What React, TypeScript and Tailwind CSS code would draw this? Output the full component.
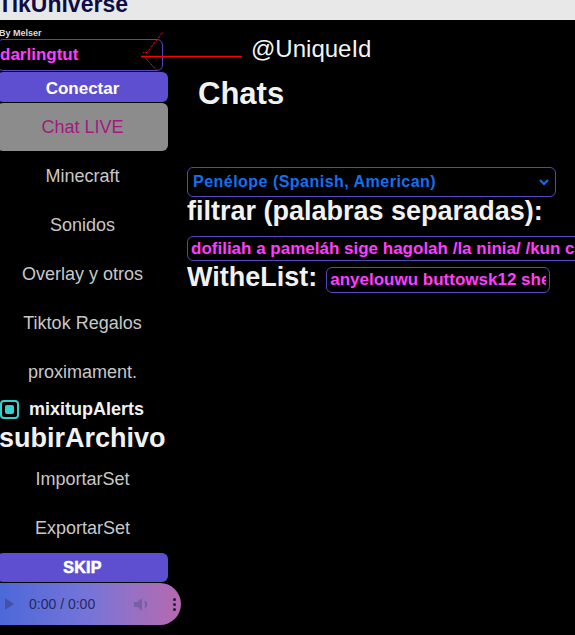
const navItems = ['Minecraft', 'Sonidos', 'Overlay y otros', 'Tiktok Regalos', 'proximament.'];

function NavItem({ label, active = false }: { label: string; active?: boolean }) {
  return (
    <div
      className={`flex h-[48px] items-center justify-center rounded-[6px] text-[18px] ${
        active ? 'bg-[#8c8c8c] text-[#a5197f]' : 'text-[#c8c8c8]'
      }`}
    >
      {label}
    </div>
  );
}

function AudioBar() {
  return (
    <div className="flex h-[42px] w-[184px] items-center rounded-r-[21px] bg-gradient-to-r from-[#4a68d8] via-[#7674d8] to-[#b668ae] pl-[8px] pr-[5px]">
      <svg width="9" height="12" viewBox="0 0 9 12" className="shrink-0">
        <path d="M0 0 L9 6 L0 12 Z" fill="#4650a8" />
      </svg>
      <span className="ml-[15px] text-[14px] text-[#252a5e]">0:00 / 0:00</span>
      <svg width="17" height="15" viewBox="0 0 17 15" className="ml-auto shrink-0">
        <path d="M0 5 H3.5 L8 1 V14 L3.5 10 H0 Z" fill="#7a5ea8" />
        <path d="M11 4.5 Q13.5 7.5 11 10.5" stroke="#7a5ea8" strokeWidth="2" fill="none" />
      </svg>
      <div className="ml-[22px] flex flex-col gap-[2px]">
        <span className="h-[3px] w-[3px] rounded-full bg-[#1c1c34]" />
        <span className="h-[3px] w-[3px] rounded-full bg-[#1c1c34]" />
        <span className="h-[3px] w-[3px] rounded-full bg-[#1c1c34]" />
      </div>
    </div>
  );
}

export default function App() {
  return (
    <div className="relative h-[635px] overflow-hidden bg-black font-['Liberation_Sans',Arial,sans-serif]">
      <header className="h-5 overflow-hidden bg-[#e8e8e8]">
        <h1 className="-ml-[2px] -mt-[7px] text-[23px] font-bold leading-none text-[#0d0d45]">TikUniverse</h1>
      </header>

      <div className="flex">
        {/* sidebar */}
        <aside className="-ml-[3px] flex w-[171px] shrink-0 flex-col gap-px">
          <span className="mt-[8px] h-[10px] pl-[2px] text-[9px] font-bold leading-[10px] text-[#dcdcdc]">By Melser</span>
          <input
            readOnly
            value="darlingtut"
            className="h-[32px] w-[166px] rounded-[6px] border border-[#5546c0] bg-black px-[2px] text-[17px] font-bold text-[#ff3dff] outline-none"
          />
          <button className="h-[30px] rounded-[6px] bg-[#5d4fd0] pt-[3px] text-[17px] font-bold text-white">Conectar</button>
          <NavItem label="Chat LIVE" active />
          {navItems.map((item) => (
            <NavItem key={item} label={item} />
          ))}
          <label className="flex h-[25px] items-center gap-[10px] pl-[3px]">
            <span className="block h-[19px] w-[19px] shrink-0 rounded-[4px] border-2 border-[#36cfcf] p-[3px]">
              <span className="block h-full w-full rounded-[2px] bg-[#36cfcf]" />
            </span>
            <span className="text-[18px] font-bold leading-[25px] text-[#f2f2f2]">mixitupAlerts</span>
          </label>
          <div className="h-[31px] whitespace-nowrap pl-[2px] text-[27px] font-bold leading-[31px] text-[#f2f2f2]">subirArchivo</div>
          <NavItem label="ImportarSet" />
          <NavItem label="ExportarSet" />
          <button className="h-[29px] rounded-[6px] bg-[#5d4fd0] pt-px text-[16px] font-bold tracking-[0.02em] text-white [-webkit-text-stroke:0.6px_white]">
            SKIP
          </button>
          <AudioBar />
        </aside>

        {/* main */}
        <main className="flex-1 pl-[19px]">
          <h2 className="ml-[11px] mt-[56px] text-[31px] font-bold leading-[36px] text-[#f2f2f2]">Chats</h2>

          <div className="mt-[55px] flex h-[30px] w-[369px] items-center justify-between rounded-[6px] border border-[#5546c0] pl-[5px] pr-[6px]">
            <span className="text-[16px] font-bold tracking-[0.03em] text-[#1470f0]">Penélope (Spanish, American)</span>
            <svg width="10" height="7" viewBox="0 0 10 7">
              <path d="M1 1 L5 5 L9 1" stroke="#1470f0" strokeWidth="2" fill="none" />
            </svg>
          </div>

          <div className="whitespace-nowrap text-[27px] font-bold leading-[28px] text-[#f2f2f2]">filtrar (palabras separadas):</div>

          <input
            readOnly
            value="dofiliah a pameláh sige hagolah /la ninia/ /kun chan/"
            className="mt-[11px] h-[25px] w-[420px] rounded-[6px] border border-[#5546c0] bg-black px-[3px] text-[17px] font-bold text-[#ff3dff] outline-none"
          />

          <div className="mt-[4px] flex items-start gap-[9px]">
            <span className="text-[27px] font-bold leading-[24px] text-[#f2f2f2]">WitheList:</span>
            <input
              readOnly
              value="anyelouwu buttowsk12 shenlong"
              className="mt-[2px] h-[26px] w-[224px] rounded-[6px] border border-[#5546c0] bg-black px-[3px] text-[17px] font-bold text-[#ff3dff] outline-none"
            />
          </div>
        </main>
      </div>

      {/* tutorial pointer over the user field */}
      <svg className="pointer-events-none absolute left-0 top-0" width="250" height="80" viewBox="0 0 250 80">
        <path d="M141 56.5 H242" stroke="#ff0000" strokeWidth="1.5" />
        <path d="M162.5 32.5 L147 52.5 H143" stroke="#ff0000" strokeWidth="1" strokeDasharray="3 1" fill="none" />
        <path d="M145 57.5 L157 70.5" stroke="#ff0000" strokeWidth="1" strokeDasharray="3 1" fill="none" />
      </svg>
      <span className="absolute left-[251px] top-[37px] text-[24px] leading-none text-[#f4f4f4]">@UniqueId</span>
    </div>
  );
}
